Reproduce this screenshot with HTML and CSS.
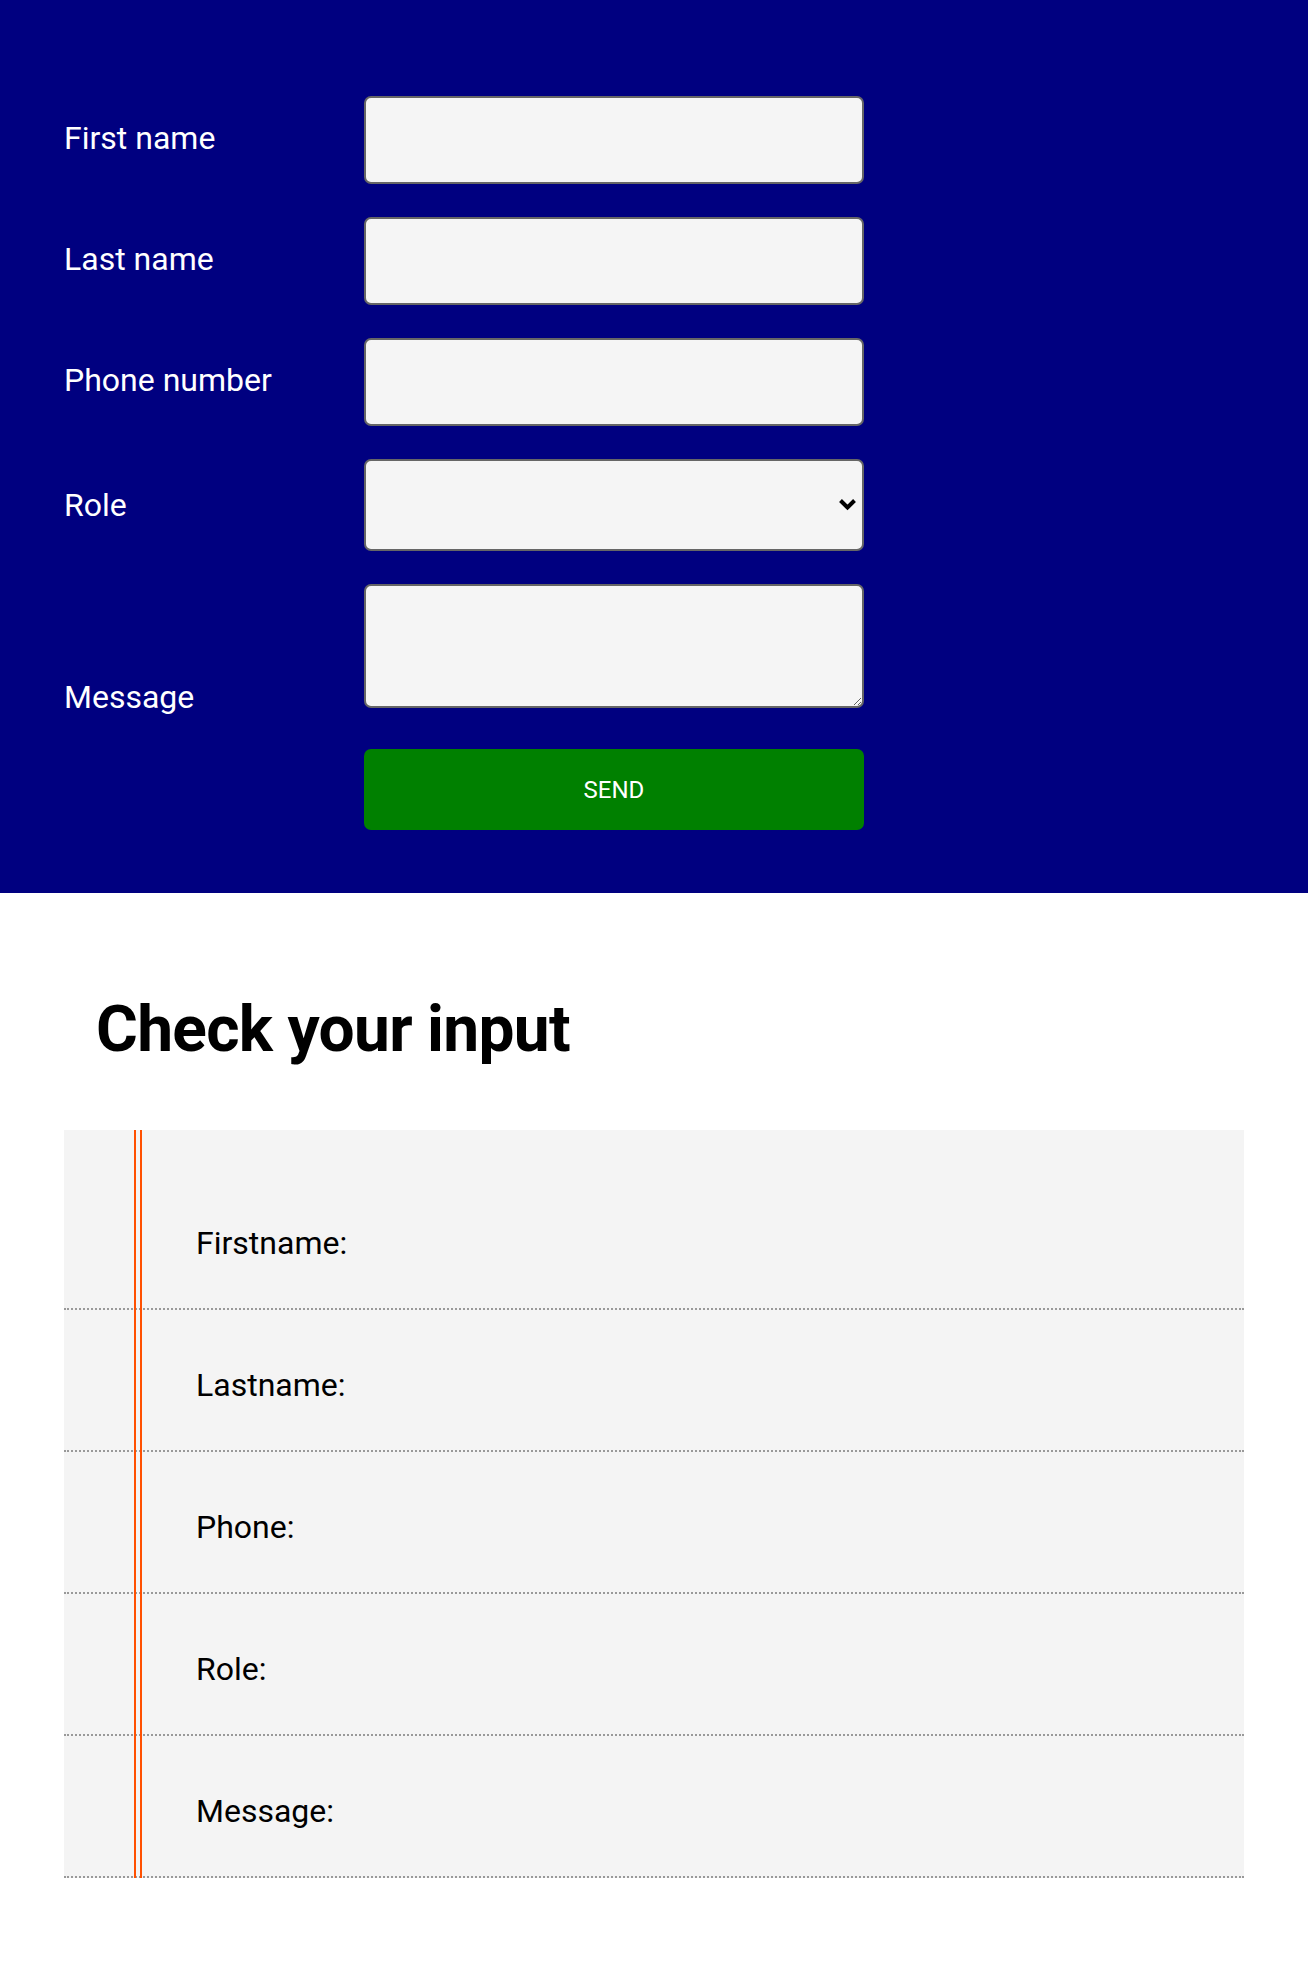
FILE: index.html
```html
<!DOCTYPE html>
<html lang="en">
<head>
<meta charset="utf-8">
<title>Contact form</title>
<link rel="stylesheet" href="styles.css">
</head>
<body>
<section class="form-area">
  <form class="form">
    <div class="row"><label class="label" for="fn">First name</label><input class="field" id="fn" type="text"></div>
    <div class="row"><label class="label" for="ln">Last name</label><input class="field" id="ln" type="text"></div>
    <div class="row"><label class="label" for="ph">Phone number</label><input class="field" id="ph" type="tel"></div>
    <div class="row"><label class="label" for="role">Role</label><span class="select-wrap"><select class="field select" id="role"><option></option></select><svg class="chevron" width="19" height="13" viewBox="0 0 19 13" aria-hidden="true"><polyline points="2.5,2.5 9.5,9.5 16.5,2.5" fill="none" stroke="#000" stroke-width="4"/></svg></span></div>
    <div class="row"><label class="label" for="msg">Message</label><textarea class="field area" id="msg"></textarea></div>
    <div class="row"><button class="send" type="button">SEND</button></div>
  </form>
</section>
<section class="check">
  <h2 class="title">Check your input</h2>
  <ul class="panel">
    <li class="item">Firstname:</li>
    <li class="item">Lastname:</li>
    <li class="item">Phone:</li>
    <li class="item">Role:</li>
    <li class="item">Message:</li>
  </ul>
</section>
</body>
</html>
```

FILE: styles.css
```css
html, body {
  margin: 0;
  padding: 0;
  background: #ffffff;
  font-family: Roboto, "Liberation Sans", Arial, sans-serif;
}

.form-area {
  background: #000080;
  padding: 96px 64px 63px;
}

.form {
  display: flex;
  flex-direction: column;
  gap: 33px;
  margin: 0;
}

.row {
  font-size: 32px;
  line-height: normal;
  color: #ffffff;
}

.label {
  display: inline-block;
  width: 300px;
}

.field {
  box-sizing: border-box;
  width: 500px;
  height: 88px;
  margin: 0;
  padding: 0 12px;
  border: 2px solid #666666;
  border-radius: 7px;
  background: #f5f5f5;
  font-family: Roboto, "Liberation Sans", sans-serif;
  font-size: 27px;
  color: #000000;
}

.select-wrap {
  position: relative;
  display: inline-block;
}

.select {
  height: 92px;
  font-size: 30px;
  -webkit-appearance: none;
  appearance: none;
  vertical-align: baseline;
}

.chevron {
  position: absolute;
  right: 7px;
  top: 39px;
  pointer-events: none;
}

.area {
  height: 124px;
  padding: 8px 12px;
  resize: both;
}

.send {
  box-sizing: border-box;
  width: 500px;
  height: 81px;
  margin: 0 0 0 300px;
  border: 0;
  border-radius: 7px;
  background: #008000;
  color: #ffffff;
  font-family: Roboto, "Liberation Sans", sans-serif;
  font-size: 24px;
  cursor: pointer;
}

.check {
  padding: 0 64px;
}

.title {
  margin: 99px 0 63px 32px;
  font-size: 64px;
  font-weight: 700;
  line-height: normal;
  letter-spacing: -0.7px;
  color: #000000;
}

.panel {
  position: relative;
  list-style: none;
  margin: 0;
  padding: 38px 0 0;
  background: #f4f4f4;
}

.panel::before {
  content: "";
  position: absolute;
  top: 0;
  bottom: 0;
  left: 70px;
  width: 4px;
  border-left: 2px solid #ff5000;
  border-right: 2px solid #ff5000;
}

.item {
  padding: 56px 0 46px 132px;
  font-size: 32px;
  line-height: 38px;
  color: #000000;
  border-bottom: 2px dotted #999999;
}
```
